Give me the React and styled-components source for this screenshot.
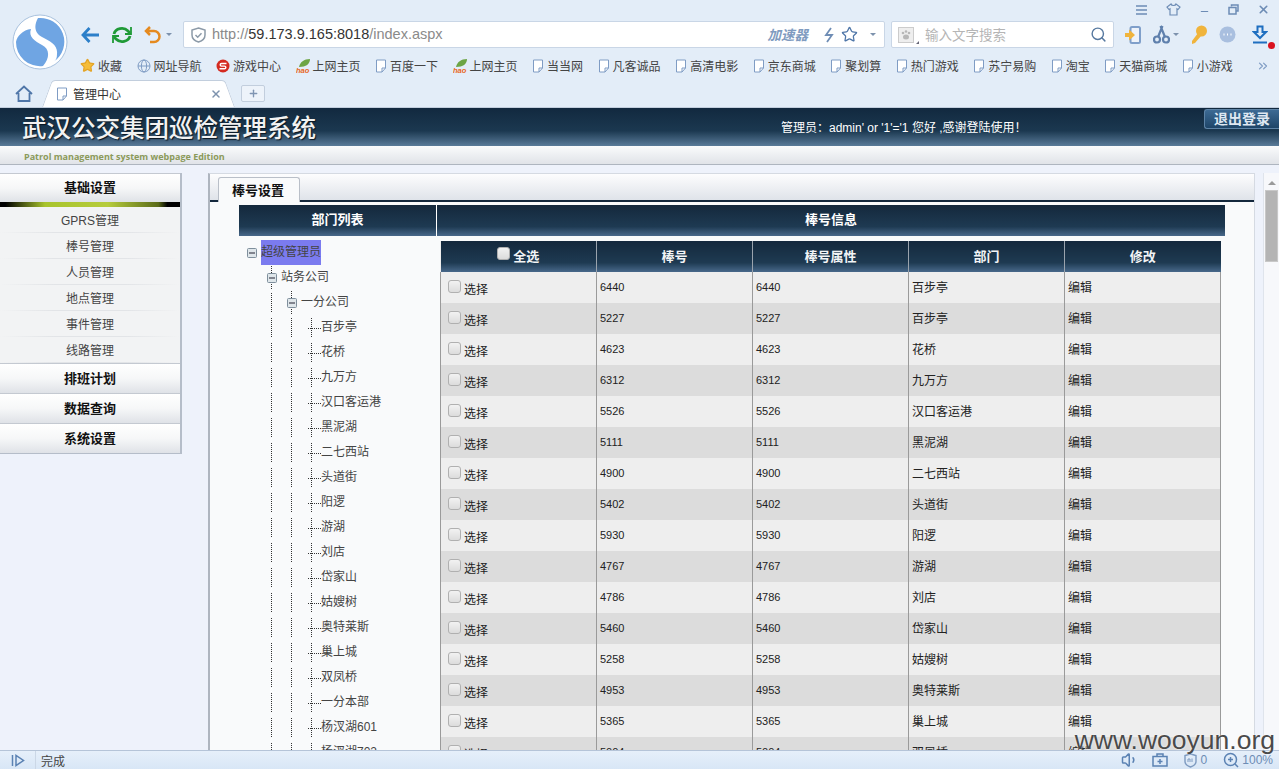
import React from 'react'
import styled, { createGlobalStyle } from 'styled-components'
import { ChevronsRight, Minus, Plus, Search, Star, Volume1, X } from 'lucide-react'

const Global = createGlobalStyle`
  html, body { margin: 0; padding: 0; background: #eef2fb; }
  * { box-sizing: border-box; }
  body { font-family: "Liberation Sans", "Noto Sans CJK SC", sans-serif; font-size: 12px; color: #333; }
`

const bookmarks = [
  { text: '收藏', icon: 'star' },
  { text: '网址导航', icon: 'globe' },
  { text: '游戏中心', icon: 'game' },
  { text: '上网主页', icon: 'hao' },
  { text: '百度一下' },
  { text: '上网主页', icon: 'hao' },
  { text: '当当网' },
  { text: '凡客诚品' },
  { text: '高清电影' },
  { text: '京东商城' },
  { text: '聚划算' },
  { text: '热门游戏' },
  { text: '苏宁易购' },
  { text: '淘宝' },
  { text: '天猫商城' },
  { text: '小游戏' },
]

const sideItems = ['GPRS管理', '棒号管理', '人员管理', '地点管理', '事件管理', '线路管理']

const leaves = ['百步亭', '花桥', '九万方', '汉口客运港', '黑泥湖', '二七西站', '头道街', '阳逻', '游湖', '刘店', '岱家山', '姑嫂树', '奥特莱斯', '巢上城', '双凤桥', '一分本部', '杨汊湖601', '杨汊湖702']

const rows = [
  ['6440', '百步亭'], ['5227', '百步亭'], ['4623', '花桥'], ['6312', '九万方'],
  ['5526', '汉口客运港'], ['5111', '黑泥湖'], ['4900', '二七西站'], ['5402', '头道街'],
  ['5930', '阳逻'], ['4767', '游湖'], ['4786', '刘店'], ['5460', '岱家山'],
  ['5258', '姑嫂树'], ['4953', '奥特莱斯'], ['5365', '巢上城'], ['5004', '双凤桥'],
]

function PageIcon() {
  return (
    <svg width="12" height="14" viewBox="0 0 12 14" fill="none">
      <path d="M1.5 1h9v8l-3.5 4h-5.500z" fill="#fff" stroke="#7f9cc4" />
      <path d="M7 13V9h3.500" stroke="#7f9cc4" />
    </svg>
  )
}

function BookmarkIcon({ type }) {
  if (type === 'star') return <Star size={15} fill="#f5bd3a" color="#e3a427" />
  if (type === 'globe') {
    return (
      <svg width="14" height="14" viewBox="0 0 14 14" fill="none" stroke="#7f9cc4">
        <circle cx="7" cy="7" r="6" />
        <ellipse cx="7" cy="7" rx="2.600" ry="6" />
        <path d="M1 7h12" />
      </svg>
    )
  }
  if (type === 'game') {
    return (
      <svg width="14" height="14" viewBox="0 0 14 14" fill="none">
        <circle cx="7" cy="7" r="6.500" fill="#d42a20" />
        <path d="M10.500 4.500H5.500a1.300 1.300 0 0 0 0 2.600h3a1.300 1.300 0 0 1 0 2.600h-5" stroke="#fff" strokeWidth="1.400" />
      </svg>
    )
  }
  if (type === 'hao') {
    return (
      <svg width="14" height="16" viewBox="0 0 14 16">
        <path d="M3 9c1-5 5-8 11-8 0 5-4 8-11 8z" fill="#6da545" />
        <text x="0" y="15" fontFamily="Liberation Sans" fontSize="7.500" fontWeight="700" fontStyle="italic" fill="#e8661c">hao</text>
      </svg>
    )
  }
  return <PageIcon />
}

function Logo() {
  return (
    <svg width="56" height="56" viewBox="0 0 56 56">
      <circle cx="28" cy="28" r="27" fill="#fff" stroke="#a9c2de" />
      <path d="M4 28C5 22 11 16 19 15C16 23 23 27 30 31C38 35 38 44 31 52A24 24 0 0 1 4 28Z" fill="#6fa5e3" />
      <path d="M26 4C22 11 22 19 30 23C38 27 46 31 45 40C45 44 44 46 42 47.600A24 24 0 0 0 26 4Z" fill="#6fa5e3" />
    </svg>
  )
}

function MinusBox() {
  return (
    <svg width="10" height="10" viewBox="0 0 10 10">
      <rect x=".5" y=".5" width="9" height="9" rx="1" fill="#dfe6ea" stroke="#7f8f9c" />
      <path d="M2 5h6" stroke="#223" />
    </svg>
  )
}

function TreeRow({ level, label, leaf, selected }) {
  const guides = []
  for (let i = 0; i < level; i++) guides.push(<Guide key={i} $hidden={i === 0} />)
  return (
    <TreeLine>
      {guides}
      {leaf ? <LeafStem /> : <Toggle $through={level > 0}><MinusBox /></Toggle>}
      <TreeLabel $selected={selected}>{label}</TreeLabel>
    </TreeLine>
  )
}

export default function App() {
  return (
    <Page>
      <Global />
      <Chrome>
        <ChromeTop>
          <LogoCell><Logo /></LogoCell>
          <ChromeRows>
            <WindowBar>
              <svg width="13" height="12" viewBox="0 0 13 12" stroke="#6d8cb5" strokeWidth="1.500"><path d="M1 2h11M1 6h11M1 10h11" /></svg>
              <svg width="15" height="13" viewBox="0 0 15 13" fill="none" stroke="#6d8cb5" strokeWidth="1.200"><path d="M5 1 1 4l2 2.500 1-.7V12h7V5.800l1 .7L14 4l-4-3c-.5 2-4.500 2-5 0z" /></svg>
              <Minus size={11} color="#6d8cb5" strokeWidth={2.500} style={{ marginTop: 4 }} />
              <svg width="11" height="11" viewBox="0 0 11 11" fill="none" stroke="#6d8cb5" strokeWidth="1.500"><path d="M3.500 2.500V1h6.500v6H8" /><rect x="1" y="3.500" width="7" height="6.500" /></svg>
              <X size={13} color="#6d8cb5" strokeWidth={3} />
            </WindowBar>
            <NavRow>
              <NavButtons>
                <svg width="20" height="18" viewBox="0 0 20 18" fill="none" stroke="#2c7fc9" strokeWidth="2.800"><path d="M19 9H3M9.500 2 3 9l6.500 7" /></svg>
                <svg width="22" height="20" viewBox="0 0 22 20" fill="none" stroke="#1f9a37" strokeWidth="2.800"><path d="M3 9a8 7 0 0 1 14-3l2 2M19 11a8 7 0 0 1-14 3l-2-2" /><path d="M20 2v7h-6M2 18v-7h6" strokeWidth="1.800" /></svg>
                <UndoWrap>
                  <svg width="18" height="18" viewBox="0 0 18 18" fill="none" stroke="#e58a1f" strokeWidth="2.500"><path d="M6 1 2 5l4 4M2 5h8a5 5 0 0 1 0 11H6" /></svg>
                  <Caret />
                </UndoWrap>
              </NavButtons>
              <AddressBar>
                <svg width="15" height="16" viewBox="0 0 15 16" fill="none" stroke="#8c9aa8" strokeWidth="1.500"><path d="M7.500 1 14 3v5c0 3.500-3 6-6.500 7C4 14 1 11.500 1 8V3z" /><path d="m4.500 8 2.200 2.200 3.800-4" /></svg>
                <Url>http://<b>59.173.9.165:8018</b>/index.aspx</Url>
                <Boost>加速器</Boost>
                <svg width="10" height="16" viewBox="0 0 10 16" fill="none" stroke="#6f8db5" strokeWidth="1.800"><path d="M7 1 2 8h6l-5 7" /></svg>
                <Star size={17} color="#4f76a8" strokeWidth={1.800} />
                <Caret />
              </AddressBar>
              <SearchBar>
                <PawBox>
                  <svg width="12" height="12" viewBox="0 0 12 12" fill="#b7b7b7"><circle cx="3" cy="4" r="1.300" /><circle cx="6" cy="2.500" r="1.300" /><circle cx="9" cy="4" r="1.300" /><ellipse cx="6" cy="8" rx="3" ry="2.500" /></svg>
                  <PawCorner />
                </PawBox>
                <SearchHint>输入文字搜索</SearchHint>
                <Search size={17} color="#56789f" />
              </SearchBar>
              <ToolIcons>
                <svg width="16" height="20" viewBox="0 0 16 20"><rect x="5.500" y="2" width="9.500" height="16" rx="1.500" fill="#eef3fa" stroke="#7f9fca" strokeWidth="2" /><path d="M0 8h4V4.500L10 10l-6 5.500V12H0z" fill="#f0b43c" /></svg>
                <ScissorWrap>
                  <svg width="17" height="19" viewBox="0 0 17 19" fill="none" stroke="#5f80ad" strokeWidth="2.200"><circle cx="4" cy="14.500" r="3" /><circle cx="13" cy="14.500" r="3" /><path d="M5 12 9.500 1M12 12 7.500 1" /></svg>
                  <Caret />
                </ScissorWrap>
                <svg width="16" height="20" viewBox="0 0 16 20" fill="#f0b43c"><circle cx="10.500" cy="6" r="5.500" /><path d="m7 8 3 3-6 7-3 1v-3z" /></svg>
                <svg width="17" height="17" viewBox="0 0 17 17"><circle cx="8.500" cy="8.500" r="8" fill="#a9bfdf" /><path d="M4.500 8.500h1M8 8.500h1M11.500 8.500h1" stroke="#fff" strokeWidth="1.800" /></svg>
                <DownloadWrap>
                  <svg width="16" height="20" viewBox="0 0 16 20" fill="none" stroke="#1f6fc0" strokeWidth="2"><path d="M5.500 1.500h5V7H14L8 13 2 7h3.500zM1 17.500h14" /></svg>
                  <RedDot />
                </DownloadWrap>
              </ToolIcons>
            </NavRow>
            <BookmarkRow>
              {bookmarks.map((b, i) => (
                <Bookmark key={i}>
                  <BookmarkIcon type={b.icon} />
                  <span>{b.text}</span>
                </Bookmark>
              ))}
              <More><ChevronsRight size={14} color="#7f9cc4" /></More>
            </BookmarkRow>
          </ChromeRows>
        </ChromeTop>
        <TabRow>
          <svg width="18" height="17" viewBox="0 0 18 17" fill="none" stroke="#4f76a8" strokeWidth="1.800"><path d="M1 9 9 1.500 17 9M3.500 8v8h11V8" /></svg>
          <BrowserTab>
            <PageIcon />
            <span>管理中心</span>
            <TabClose><X size={12} color="#7d92ad" strokeWidth={3} /></TabClose>
          </BrowserTab>
          <NewTab><Plus size={11} color="#7f95b2" strokeWidth={3} /></NewTab>
        </TabRow>
      </Chrome>

      <Banner>
        <BannerTop>
          <SystemTitle>武汉公交集团巡检管理系统</SystemTitle>
          <Welcome>管理员：admin' or '1'='1 您好 ,感谢登陆使用！</Welcome>
          <Logout>退出登录</Logout>
        </BannerTop>
        <BannerBottom>Patrol management system webpage Edition</BannerBottom>
      </Banner>

      <Main>
        <Sidebar>
          <SideHead $h={29}>基础设置</SideHead>
          <GreenBar />
          <SideList>
            {sideItems.map(item => <SideItem key={item}>{item}</SideItem>)}
          </SideList>
          <SideHead $h={30}>排班计划</SideHead>
          <SideHead $h={30}>数据查询</SideHead>
          <SideHead $h={30}>系统设置</SideHead>
        </Sidebar>

        <Panel>
          <PanelTabs><PanelTab>棒号设置</PanelTab></PanelTabs>
          <PanelBody>
            <LayoutHead>
              <HeadCell $w={197}>部门列表</HeadCell>
              <HeadCell $grow>棒号信息</HeadCell>
            </LayoutHead>
            <Columns>
              <Tree>
                <TreeRow level={0} label="超级管理员" selected />
                <TreeRow level={1} label="站务公司" />
                <TreeRow level={2} label="一分公司" />
                {leaves.map(name => <TreeRow key={name} level={3} label={name} leaf />)}
              </Tree>
              <DataTable>
                <thead>
                  <tr>
                    <Th><SelectCell $center><CheckBox type="checkbox" readOnly /><SelectText>全选</SelectText></SelectCell></Th>
                    <Th>棒号</Th>
                    <Th>棒号属性</Th>
                    <Th>部门</Th>
                    <Th>修改</Th>
                  </tr>
                </thead>
                <tbody>
                  {rows.map((r, i) => (
                    <Row key={i} $alt={i % 2 === 1}>
                      <Td><SelectCell><CheckBox type="checkbox" readOnly /><SelectText>选择</SelectText></SelectCell></Td>
                      <Td $small>{r[0]}</Td>
                      <Td $small>{r[0]}</Td>
                      <Td>{r[1]}</Td>
                      <Td>编辑</Td>
                    </Row>
                  ))}
                </tbody>
              </DataTable>
            </Columns>
          </PanelBody>
        </Panel>

        <Scrollbar>
          <ScrollArrow />
          <ScrollThumb />
        </Scrollbar>
      </Main>

      <StatusBar>
        <StatusLeft>
          <StatusPlay>
            <svg width="14" height="13" viewBox="0 0 14 13" fill="none" stroke="#5b82b3" strokeWidth="1.500"><path d="M1.500 1v11M5 1.500v10l7.500-5z" /></svg>
          </StatusPlay>
          <span>完成</span>
        </StatusLeft>
        <StatusRight>
          <Volume1 size={18} color="#5b82b3" />
          <svg width="16" height="14" viewBox="0 0 16 14" fill="none" stroke="#5b82b3" strokeWidth="1.500" style={{ marginLeft: -3 }}><rect x="1" y="3.500" width="14" height="9.500" /><path d="M5 3.500V1h6v2.500M8 6v5M5.500 8.500h5" /></svg>
          <AdCount>
            <svg width="13" height="15" viewBox="0 0 13 15" fill="none" stroke="#7d9ac0" strokeWidth="1.400"><path d="M6.500 1 12 2.500v6c0 2.500-2.500 4.500-5.500 5.500C3.500 13 1 11 1 8.500v-6z" /><path d="M4 9V6h2v3M8 5.500v3.500" strokeWidth="1" /></svg>
            0
          </AdCount>
          <Zoom>
            <svg width="16" height="16" viewBox="0 0 16 16" fill="none" stroke="#5b82b3" strokeWidth="1.500"><circle cx="7.500" cy="7.500" r="6" /><path d="M5 7.500h5M7.500 5v5M12 12l3 3" /></svg>
            100%
          </Zoom>
        </StatusRight>
      </StatusBar>

      <Watermark>www.wooyun.org</Watermark>
    </Page>
  )
}

const Page = styled.div`
  position: relative;
  width: 1279px;
  height: 769px;
  overflow: hidden;
  display: flex;
  flex-direction: column;
  background: #eef2fb;
`

const Chrome = styled.div`
  height: 108px;
  flex-shrink: 0;
  background: #e3edf8;
  border-bottom: 1px solid #c2cedd;
`

const ChromeTop = styled.div`
  height: 80px;
  display: flex;
`

const LogoCell = styled.div`
  width: 80px;
  flex-shrink: 0;
  padding: 14px 0 0 12px;
`

const ChromeRows = styled.div`
  flex: 1;
  min-width: 0;
  display: flex;
  flex-direction: column;
`

const WindowBar = styled.div`
  height: 21px;
  display: flex;
  justify-content: flex-end;
  align-items: center;
  gap: 18px;
  padding: 0 9px 2px 0;
  svg { flex-shrink: 0; }
`

const NavRow = styled.div`
  height: 27px;
  display: flex;
  align-items: center;
`

const NavButtons = styled.div`
  width: 103px;
  display: flex;
  align-items: center;
  gap: 11px;
  flex-shrink: 0;
`

const UndoWrap = styled.div`
  display: flex;
  align-items: center;
  gap: 4px;
`

const Caret = styled.span`
  width: 0;
  height: 0;
  border-left: 3px solid transparent;
  border-right: 3px solid transparent;
  border-top: 3px solid #7d92ad;
`

const AddressBar = styled.div`
  width: 702px;
  height: 27px;
  display: flex;
  align-items: center;
  gap: 7px;
  padding: 0 8px 0 7px;
  background: #fff;
  border: 1px solid #c9d6e6;
  border-radius: 2px;
  svg { flex-shrink: 0; }
  > :last-child { margin-left: 5px; }
`

const Url = styled.div`
  flex: 1;
  margin-left: -1px;
  padding-bottom: 2px;
  font-size: 14.500px;
  color: #8a8a8a;
  b { color: #333; font-weight: normal; }
`

const Boost = styled.span`
  padding-bottom: 1px;
  font-style: italic;
  font-weight: 700;
  font-size: 13.500px;
  color: #7f9bc0;
  margin-right: 9px;
`

const SearchBar = styled.div`
  width: 223px;
  height: 27px;
  margin-left: 6px;
  display: flex;
  align-items: center;
  padding: 0 6px;
  background: #fff;
  border: 1px solid #c9d6e6;
  border-radius: 2px;
`

const PawBox = styled.div`
  position: relative;
  width: 16px;
  height: 16px;
  display: flex;
  align-items: center;
  justify-content: center;
  background: #eee;
  border: 1px solid #ccc;
`

const PawCorner = styled.span`
  position: absolute;
  right: -6px;
  bottom: -2px;
  width: 0;
  height: 0;
  border-left: 3px solid transparent;
  border-bottom: 3px solid #667;
`

const SearchHint = styled.span`
  flex: 1;
  margin-left: 11px;
  padding-bottom: 2px;
  font-size: 13.500px;
  color: #b5b5b5;
`

const ToolIcons = styled.div`
  flex: 1;
  display: flex;
  align-items: center;
  gap: 12px;
  padding-left: 11px;
`

const ScissorWrap = styled.div`
  display: flex;
  align-items: center;
  gap: 3px;
`

const DownloadWrap = styled.div`
  position: relative;
  display: flex;
  margin-left: 4px;
`

const RedDot = styled.span`
  position: absolute;
  right: -7px;
  bottom: -4px;
  width: 7px;
  height: 7px;
  border-radius: 50%;
  background: #d9121f;
`

const BookmarkRow = styled.div`
  height: 32px;
  padding-top: 3px;
  display: flex;
  align-items: center;
  gap: 14.500px;
`

const Bookmark = styled.div`
  display: flex;
  align-items: center;
  gap: 3px;
  font-size: 12px;
  color: #444;
  white-space: nowrap;
  flex-shrink: 0;
`

const More = styled.div`
  display: flex;
  margin-left: 9px;
`

const TabRow = styled.div`
  height: 27px;
  display: flex;
  align-items: flex-end;
  padding-left: 15px;
  > svg { margin-bottom: 5px; }
`

const BrowserTab = styled.div`
  position: relative;
  width: 193px;
  height: 27px;
  margin-left: 9px;
  padding-left: 14px;
  display: flex;
  align-items: center;
  gap: 5px;
  font-size: 12px;
  color: #333;
  > * { position: relative; z-index: 1; }
  &::before, &::after {
    content: '';
    position: absolute;
    top: 0;
    bottom: 0;
    width: 60%;
    background: #fff;
    border-top: 1px solid #c2cedd;
  }
  &::before {
    left: 0;
    border-left: 1px solid #c2cedd;
    border-radius: 4px 0 0 0;
    transform-origin: bottom left;
    transform: skewX(-20deg);
  }
  &::after {
    right: 0;
    border-right: 1px solid #c2cedd;
    border-radius: 0 4px 0 0;
    transform-origin: bottom right;
    transform: skewX(20deg);
  }
`

const TabClose = styled.span`
  position: absolute !important;
  right: 13px;
  top: 8px;
  display: flex;
`

const NewTab = styled.div`
  width: 24px;
  height: 17px;
  margin: 0 0 5px 6px;
  display: flex;
  align-items: center;
  justify-content: center;
  background: #edf3fa;
  border: 1px solid #c2cedd;
  border-radius: 2px;
`

const Banner = styled.div`
  flex-shrink: 0;
`

const BannerTop = styled.div`
  height: 38px;
  display: flex;
  align-items: center;
  background: linear-gradient(#12293f 0%, #1b3850 60%, #5a7b99 100%);
  color: #fff;
  padding: 0 0 2px 22px;
`

const SystemTitle = styled.div`
  width: 759px;
  font-family: "Noto Sans CJK SC", sans-serif;
  font-size: 24.500px;
  font-weight: 500;
  color: #f2f2f2;
  text-shadow: 1px 1px 1px #0a1520;
  white-space: nowrap;
`

const Welcome = styled.div`
  flex: 1;
  font-size: 12px;
  white-space: nowrap;
`

const Logout = styled.div`
  align-self: flex-start;
  width: 75px;
  height: 20px;
  margin-top: 1px;
  text-align: center;
  line-height: 19px;
  font-size: 14px;
  font-weight: 700;
  color: #dfe8f2;
  background: linear-gradient(#3d6a94, #1e4568);
  border: 1px solid #5d83a6;
  border-right: none;
  border-radius: 3px 0 0 3px;
`

const BannerBottom = styled.div`
  height: 19px;
  padding-left: 24px;
  font-family: "Open Sans", sans-serif;
  font-size: 9px;
  font-weight: 700;
  line-height: 21px;
  color: #8b9a5a;
  background: linear-gradient(#fafbfc, #e0e3e8);
  border-bottom: 1px solid #aeb5bf;
`

const Main = styled.div`
  flex: 1;
  min-height: 0;
  overflow: hidden;
  display: flex;
  align-items: flex-start;
`

const Sidebar = styled.div`
  width: 182px;
  margin-top: 8px;
  flex-shrink: 0;
  display: flex;
  flex-direction: column;
  background: #f2f3f4;
  border-right: 2px solid #b5bdc9;
  border-bottom: 1px solid #b5bdc9;
`

const SideHead = styled.div`
  height: ${p => p.$h}px;
  padding-bottom: 3px;
  display: flex;
  align-items: center;
  justify-content: center;
  font-family: "Noto Sans CJK SC", sans-serif;
  font-size: 13px;
  font-weight: 700;
  color: #111;
  background: linear-gradient(#fff 0%, #f6f7f8 50%, #dfe2e7 100%);
  border-top: 1px solid #c4c9d1;
`

const GreenBar = styled.div`
  height: 5px;
  background: linear-gradient(90deg, #000 3%, #a8c42c 25%, #b6cc3c 60%, #5a6a18 88%, #000 93%);
`

const SideList = styled.div`
  background: #f2f3f4;
`

const SideItem = styled.div`
  height: 26px;
  padding-bottom: 2px;
  display: flex;
  align-items: center;
  justify-content: center;
  font-size: 12px;
  color: #444;
  background: linear-gradient(90deg, transparent, #e2e4e7 30%, #e2e4e7 70%, transparent) bottom / 100% 1px no-repeat;
`

const Panel = styled.div`
  width: 1047px;
  height: 600px;
  margin: 8px 0 0 26px;
  flex-shrink: 0;
  background: #f9fafb;
  border-left: 2px solid #aeb5bf;
  border-right: 1px solid #d5dae2;
  border-top: 1px solid #d5dae2;
`

const PanelTabs = styled.div`
  height: 28px;
  padding: 3px 0 0 8px;
  background: linear-gradient(#fdfdfe, #dfe3e9);
  border-bottom: 2px solid #14283c;
`

const PanelTab = styled.div`
  width: 82px;
  height: 25px;
  padding: 0 2px 2px 0;
  display: flex;
  align-items: center;
  justify-content: center;
  font-family: "Noto Sans CJK SC", sans-serif;
  font-size: 13px;
  font-weight: 700;
  color: #111;
  background: #f9fafb;
  border: 1px solid #b9bfc8;
  border-bottom: none;
  border-radius: 3px 3px 0 0;
`

const PanelBody = styled.div`
  padding: 3px 29px 0 29px;
`

const LayoutHead = styled.div`
  display: flex;
  height: 31px;
  gap: 1px;
  background: #fff;
`

const HeadCell = styled.div`
  width: ${p => (p.$w ? `${p.$w}px` : 'auto')};
  flex: ${p => (p.$grow ? 1 : 'none')};
  padding-bottom: 4px;
  display: flex;
  align-items: center;
  justify-content: center;
  font-family: "Noto Sans CJK SC", sans-serif;
  font-size: 13px;
  font-weight: 700;
  color: #fff;
  background: linear-gradient(#14283c 0%, #1e3a52 70%, #48688a 100%);
`

const Columns = styled.div`
  display: flex;
  align-items: flex-start;
`

const Tree = styled.div`
  width: 201px;
  padding: 4px 0 0 8px;
  flex-shrink: 0;
`

const TreeLine = styled.div`
  height: 25px;
  display: flex;
  align-items: center;
  white-space: nowrap;
`

const Guide = styled.span`
  width: 20px;
  height: 19px;
  flex-shrink: 0;
  background: ${p => (p.$hidden ? 'none' : 'linear-gradient(#333 50%, transparent 50%) 4px 0 / 1px 2px repeat-y')};
`

const Toggle = styled.span`
  position: relative;
  width: 14px;
  height: 10px;
  display: flex;
  flex-shrink: 0;
  background: linear-gradient(#666 50%, transparent 50%) 10px 5px / 2px 1px no-repeat;
  &::before {
    content: '';
    display: ${p => (p.$through ? 'block' : 'none')};
    position: absolute;
    left: 4px;
    top: -7px;
    height: 24px;
    width: 1px;
    background: linear-gradient(#333 50%, transparent 50%) 0 0 / 1px 2px repeat-y;
  }
  svg { position: relative; z-index: 1; }
`

const LeafStem = styled.span`
  width: 14px;
  height: 19px;
  flex-shrink: 0;
  background:
    linear-gradient(#333 50%, transparent 50%) 4px 0 / 1px 2px repeat-y,
    linear-gradient(90deg, #333 50%, transparent 50%) 5px 10px / 2px 1px repeat-x;
`

const TreeLabel = styled.span`
  font-size: 12px;
  color: #444;
  line-height: 25px;
  background: ${p => (p.$selected ? '#7b7bef' : 'none')};
`

const DataTable = styled.table`
  width: 781px;
  margin-top: 5px;
  border-collapse: collapse;
  table-layout: fixed;
  background: #eee;
`

const Th = styled.th`
  height: 31px;
  padding: 0 0 3px;
  font-family: "Noto Sans CJK SC", sans-serif;
  font-size: 13px;
  font-weight: 700;
  color: #f2f4f6;
  background: linear-gradient(#14283c 0%, #1e3a52 70%, #48688a 100%);
  border-right: 1px solid #9aa3ad;
  &:last-child { border-right: none; }
`

const Row = styled.tr`
  background: ${p => (p.$alt ? '#dcdcdc' : '#eeeeee')};
`

const Td = styled.td`
  height: 31px;
  padding: 0 0 2px 3px;
  font-size: ${p => (p.$small ? '11px' : '12px')};
  color: #222;
  border-right: 1px solid #9a9a9a;
  white-space: nowrap;
  &:first-child { padding: 0 0 0 7px; border-left: 1px solid #9a9a9a; }
`

const SelectCell = styled.div`
  display: flex;
  align-items: center;
  gap: 3px;
  justify-content: ${p => (p.$center ? 'center' : 'flex-start')};
`

const CheckBox = styled.input`
  appearance: none;
  width: 13px;
  height: 13px;
  margin: 0 0 3px;
  background: linear-gradient(#f2f2f2, #dcdcdc);
  border: 1px solid #b0b0b0;
  border-radius: 3px;
`

const SelectText = styled.span`
  margin-top: 1px;
`

const Scrollbar = styled.div`
  width: 16px;
  height: 600px;
  margin: 8px 0 0 8px;
  flex-shrink: 0;
  display: flex;
  flex-direction: column;
  align-items: center;
  background: #f7f8fb;
  border-left: 1px solid #dfe4ec;
`

const ScrollArrow = styled.div`
  margin-top: 8px;
  width: 0;
  height: 0;
  border-left: 4px solid transparent;
  border-right: 4px solid transparent;
  border-bottom: 4px solid #9a9a9a;
`

const ScrollThumb = styled.div`
  width: 13px;
  height: 72px;
  margin-top: 5px;
  background: #b4b4b4;
  border: 1px solid #c8c8c8;
`

const StatusBar = styled.div`
  height: 19px;
  flex-shrink: 0;
  display: flex;
  justify-content: space-between;
  align-items: center;
  background: linear-gradient(#e6effa, #d8e6f6);
  border-top: 1px solid #b5c4d8;
  position: relative;
  z-index: 1;
`

const StatusLeft = styled.div`
  display: flex;
  align-items: center;
  height: 100%;
  font-size: 12px;
  color: #444;
`

const StatusPlay = styled.div`
  width: 36px;
  height: 100%;
  display: flex;
  align-items: center;
  justify-content: center;
  margin-right: 5px;
  border-right: 1px solid #cbd7e6;
`

const StatusRight = styled.div`
  display: flex;
  align-items: center;
  gap: 16px;
  padding-right: 6px;
  color: #6d8cb5;
  font-size: 12px;
`

const AdCount = styled.div`
  display: flex;
  align-items: center;
  gap: 4px;
`

const Zoom = styled.div`
  display: flex;
  align-items: center;
  gap: 3px;
`

const Watermark = styled.div`
  position: absolute;
  right: 4px;
  bottom: 13px;
  z-index: 2;
  font-family: "Liberation Sans", sans-serif;
  font-size: 26.500px;
  color: #4a4a4a;
  text-shadow: 0 0 2px #fff;
`
